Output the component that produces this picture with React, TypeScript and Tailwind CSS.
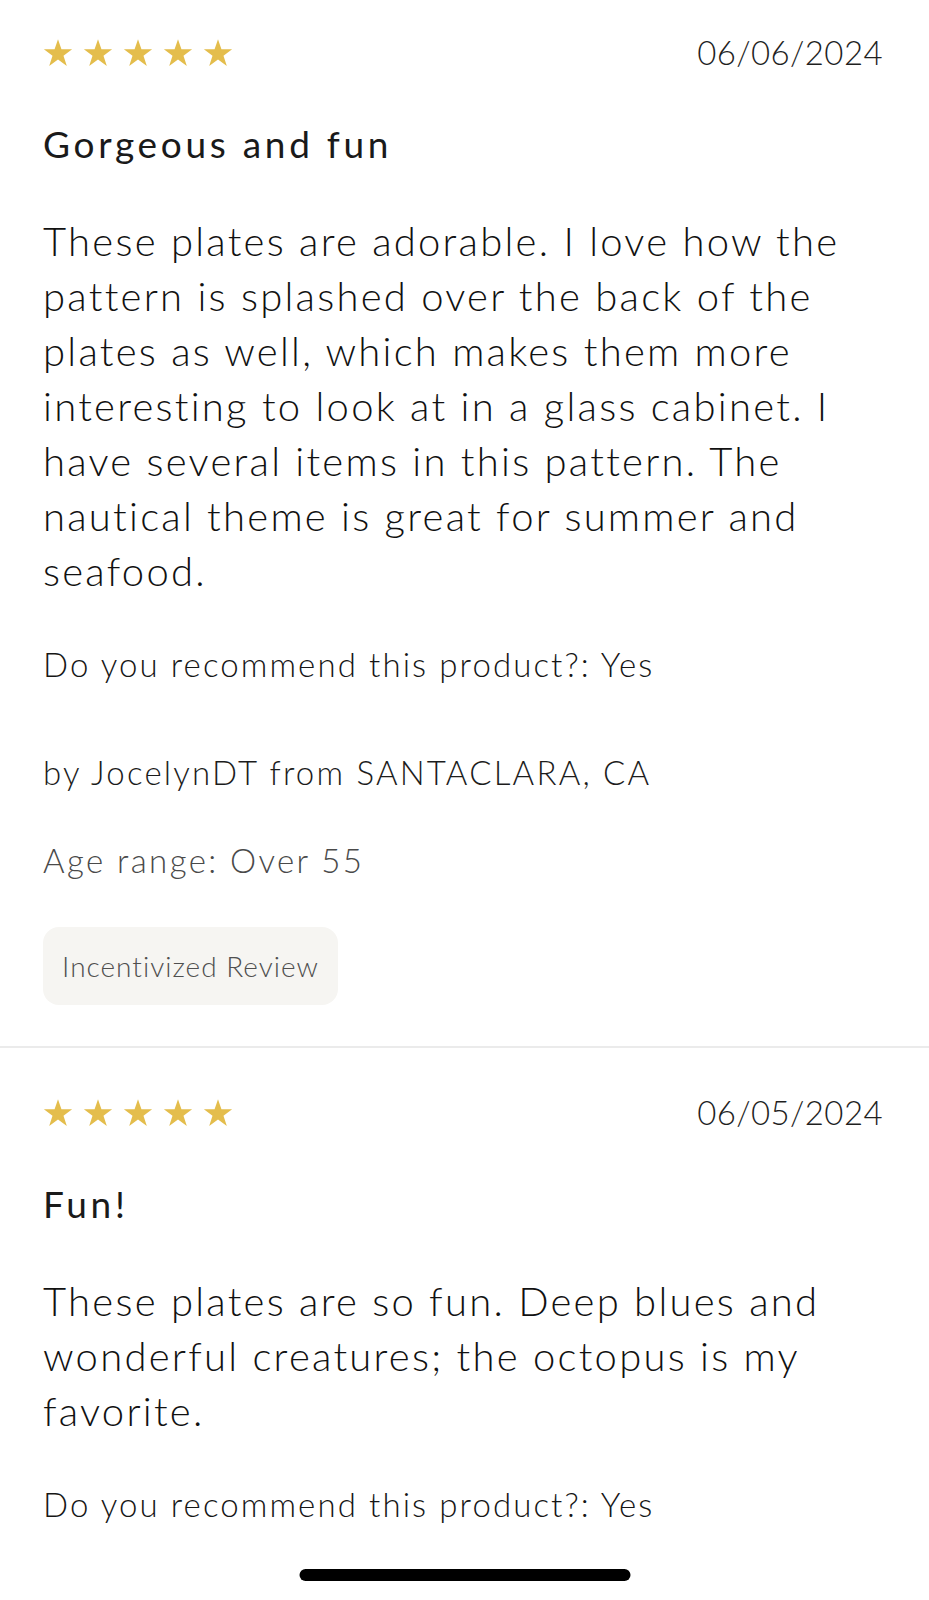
import React from "react";

function Star() {
  return (
    <svg width="30" height="29" viewBox="0 0 24 23" className="block">
      <path
        d="M12 0.8l2.75 8.15h8.55l-6.9 5.05 2.65 8.2L12 17.1l-7.05 5.1 2.65-8.2-6.9-5.05h8.55z"
        fill="#E4BD4C"
      />
    </svg>
  );
}

function Stars() {
  return (
    <div className="flex items-center gap-[10px]">
      <Star />
      <Star />
      <Star />
      <Star />
      <Star />
    </div>
  );
}

type Review = {
  date: string;
  title: string;
  body: string[];
  by: string;
  age: string;
};

function ReviewBlock({ r, first }: { r: Review; first: boolean }) {
  return (
    <section className={`pl-[43px] pr-[46px] ${first ? "pt-[38px]" : "pt-[50px]"}`}>
      <div className="flex h-[29px] items-center justify-between">
        <Stars />
        <span className="text-[33px] leading-none font-light text-[#1f1f1f] tracking-[0.4px]">{r.date}</span>
      </div>
      <h2 className="mt-[55px] text-[37px] leading-[44px] font-normal text-[#1a1a1a] tracking-[3.7px]">
        {r.title}
      </h2>
      <p className="mt-[48px] text-[40px] leading-[55px] font-light text-[#111111] tracking-[2.25px] whitespace-nowrap">
        {r.body.map((l, i) => (
          <React.Fragment key={i}>
            {l}
            {i < r.body.length - 1 && <br />}
          </React.Fragment>
        ))}
      </p>
      <p className="mt-[45px] text-[33px] leading-[40px] font-light text-[#161616] tracking-[2.1px]">
        Do you recommend this product?: Yes
      </p>
      {r.by && (
        <p className="mt-[68px] text-[33px] leading-[40px] font-light text-[#1c1c1c] tracking-[2.2px]">{r.by}</p>
      )}
      {r.age && (
        <p className="mt-[48px] text-[33px] leading-[40px] font-light text-[#4a4a4a] tracking-[2.4px]">{r.age}</p>
      )}
      {r.age && (
        <div className="mt-[47px] flex h-[78px] w-[295px] items-center justify-center rounded-[16px] bg-[#f6f5f2]">
          <span className="text-[28px] leading-none font-light text-[#4f4f4f] tracking-[1px]">Incentivized Review</span>
        </div>
      )}
    </section>
  );
}

const reviews: Review[] = [
  {
    date: "06/06/2024",
    title: "Gorgeous and fun",
    body: [
      "These plates are adorable. I love how the",
      "pattern is splashed over the back of the",
      "plates as well, which makes them more",
      "interesting to look at in a glass cabinet. I",
      "have several items in this pattern. The",
      "nautical theme is great for summer and",
      "seafood.",
    ],
    by: "by JocelynDT from SANTACLARA, CA",
    age: "Age range: Over 55",
  },
  {
    date: "06/05/2024",
    title: "Fun!",
    body: [
      "These plates are so fun. Deep blues and",
      "wonderful creatures; the octopus is my",
      "favorite.",
    ],
    by: "",
    age: "",
  },
];

export default function App() {
  return (
    <div
      className="relative h-[1600px] w-full overflow-hidden bg-white"
      style={{ fontFamily: "Lato, 'Noto Sans', sans-serif" }}
    >
      <ReviewBlock r={reviews[0]} first />
      <div className="mt-[41px] h-[2px] w-full bg-[#ebebeb]" />
      <ReviewBlock r={reviews[1]} first={false} />
      <div className="absolute bottom-[19px] left-1/2 h-[12px] w-[331px] -translate-x-1/2 rounded-full bg-black" />
    </div>
  );
}
